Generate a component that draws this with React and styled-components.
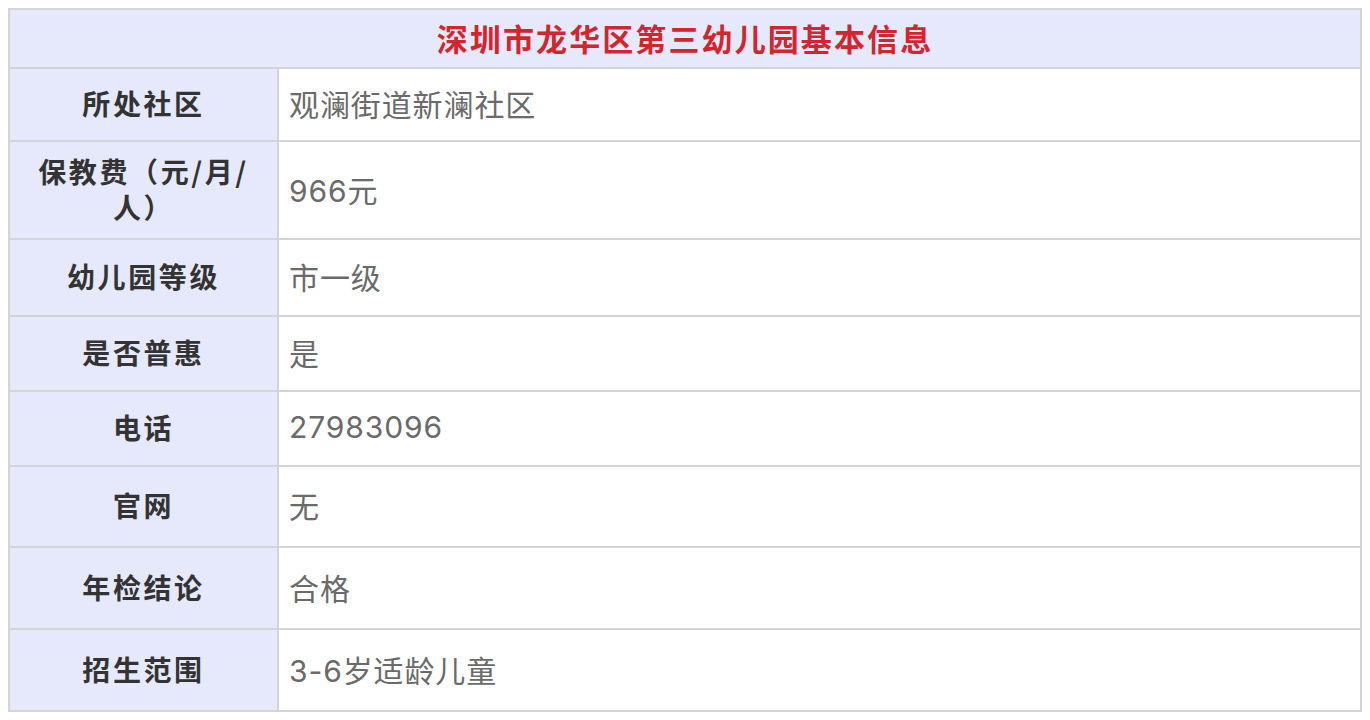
import React from "react";
import styled, { createGlobalStyle } from "styled-components";

const Global = createGlobalStyle`
  html, body { margin: 0; padding: 0; background: #ffffff; }
  body { padding: 8px; font-family: "Noto Sans CJK SC", "Noto Sans", sans-serif; }
`;

const Table = styled.div`
  display: flex;
  flex-direction: column;
  gap: 2px;
  padding: 2px;
  background: #d4d4d6;
  width: 100%;
  box-sizing: border-box;
`;

const Title = styled.div`
  height: 57px;
  box-sizing: border-box;
  padding-bottom: 3px;
  background: #e5e9fb;
  display: flex;
  align-items: center;
  justify-content: center;
  color: #d2262f;
  font-weight: 700;
  font-size: 31px;
  letter-spacing: 2.1px;
`;

const Row = styled.div`
  display: grid;
  grid-template-columns: 267px 1fr;
  gap: 2px;
  height: ${(p) => p.$h}px;
`;

const Label = styled.div`
  background: #e5e9fb;
  display: flex;
  align-items: center;
  justify-content: center;
  text-align: center;
  padding: 0 14px 3px;
  color: #333333;
  font-weight: 700;
  font-size: 28px;
  letter-spacing: 2.6px;
  line-height: 36px;
`;

const Value = styled.div`
  background: #ffffff;
  display: flex;
  align-items: center;
  padding: 0 0 3px 10px;
  color: #6a6a6a;
  font-family: "Inter", "Noto Sans CJK SC", sans-serif;
  font-size: 30px;
  letter-spacing: 0.9px;
`;

const rows = [
  ["所处社区", "观澜街道新澜社区", 71],
  ["保教费（元/月/人）", "966元", 96],
  ["幼儿园等级", "市一级", 75],
  ["是否普惠", "是", 73],
  ["电话", "27983096", 73],
  ["官网", "无", 79],
  ["年检结论", "合格", 80],
  ["招生范围", "3-6岁适龄儿童", 80],
];

export default function App() {
  return (
    <>
      <Global />
      <Table>
        <Title>深圳市龙华区第三幼儿园基本信息</Title>
        {rows.map(([k, v, h]) => (
          <Row key={k} $h={h}>
            <Label>{k}</Label>
            <Value>{v}</Value>
          </Row>
        ))}
      </Table>
    </>
  );
}
